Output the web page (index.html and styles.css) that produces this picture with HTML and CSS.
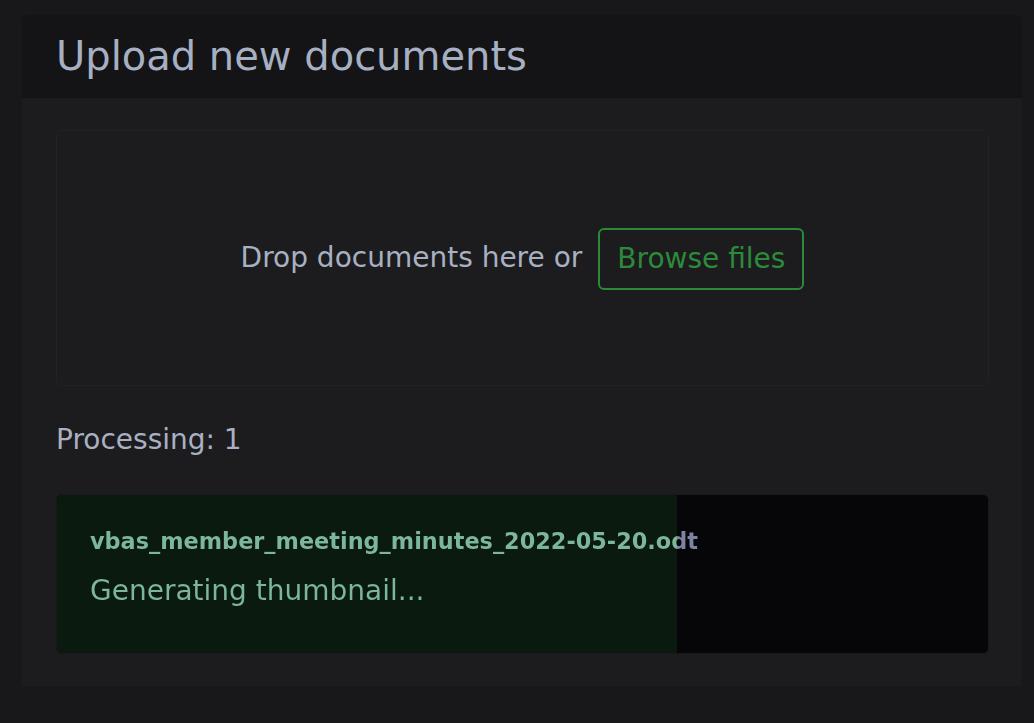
FILE: index.html
```html
<!DOCTYPE html>
<html lang="en">
<head>
<meta charset="utf-8">
<title>Upload new documents</title>
<link rel="stylesheet" href="styles.css">
</head>
<body>
<div class="page">
  <section class="card">
    <header class="card-header">
      <h4 class="card-title">Upload new documents</h4>
    </header>
    <div class="card-body">
      <div class="dropzone">
        <span class="drop-text">Drop documents here or</span>
        <button class="btn-browse" type="button">Browse files</button>
      </div>
      <p class="processing">Processing: 1</p>
      <div class="upload-item">
        <div class="upload-progress" style="width: 66.6%"></div>
        <div class="upload-text" style="--p: 66.6%">
          <div class="file-name">vbas_member_meeting_minutes_2022-05-20.odt</div>
          <div class="file-status">Generating thumbnail...</div>
        </div>
      </div>
    </div>
  </section>
</div>
</body>
</html>
```
FILE: styles.css
```css
html, body {
  margin: 0;
  padding: 0;
  background: #18181a;
  height: 100%;
}
body {
  font-family: "DejaVu Sans", sans-serif;
  font-size: 28px;
  line-height: 1.5;
  color: #a9b0c2;
}
.page {
  padding: 15px 12px 0 22px;
}
.card {
  width: 1000px;
  background: #1c1c1e;
  border-radius: 6px 6px 0 0;
}
.card-header {
  background: #141416;
  border-radius: 6px 6px 0 0;
  padding: 17px 34px;
  border-bottom: 1px solid #121214;
  height: 48px;
}
.card-title {
  margin: 0;
  font-size: 40px;
  font-weight: normal;
  line-height: 48px;
  color: #a7b0c3;
}
.card-body {
  padding: 32px 33px 32px 34px;
}
.dropzone {
  height: 254px;
  border: 1px solid #222225;
  border-radius: 6px;
  display: flex;
  align-items: center;
  justify-content: center;
  gap: 16px;
}
.drop-text {
  color: #a9b0c2;
}
.btn-browse {
  font-family: inherit;
  font-size: 28px;
  line-height: 42px;
  color: #2c8a3a;
  background: transparent;
  border: 2px solid #2a8a38;
  border-radius: 6px;
  padding: 8px 17px;
  margin-left: 0;
  margin-top: 1px;
}
.processing {
  margin: 33px 0 33px 0;
  line-height: 42px;
  color: #a9b0c2;
}
.upload-item {
  position: relative;
  height: 158px;
  border: 1px solid #19191b;
  border-radius: 6px;
  background: #060608;
  overflow: hidden;
}
.upload-progress {
  position: absolute;
  top: 0;
  left: 0;
  bottom: 0;
  background: #0a1a0f;
}
.upload-text {
  position: relative;
  padding: 30px 33px 0 33px;
  background: linear-gradient(90deg, #7db79b var(--p), #7d84a2 var(--p));
  -webkit-background-clip: text;
  background-clip: text;
  color: transparent;
}
.file-name {
  font-size: 22.4px;
  font-weight: bold;
  line-height: 33px;
}
.file-status {
  margin-top: 12px;
  line-height: 42px;
}
```
